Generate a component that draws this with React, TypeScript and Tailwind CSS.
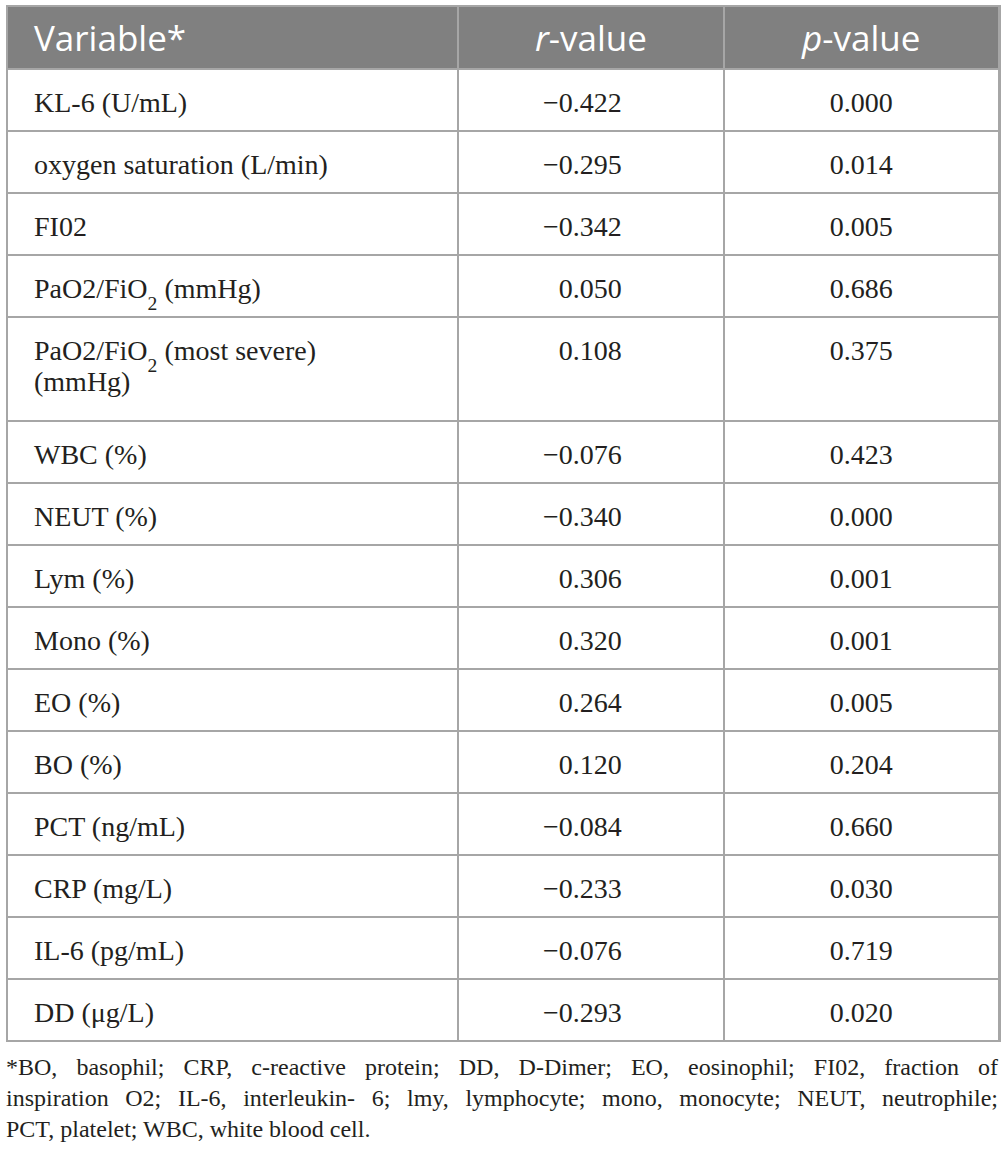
import React from 'react';

type Row = {
  label: React.ReactNode;
  r: string;
  p: string;
  tall?: boolean;
};

const rows: Row[] = [
  { label: 'KL-6 (U/mL)', r: '−0.422', p: '0.000' },
  { label: 'oxygen saturation (L/min)', r: '−0.295', p: '0.014' },
  { label: 'FI02', r: '−0.342', p: '0.005' },
  {
    label: (
      <>
        PaO2/FiO<sub className="text-[0.7em] align-[-0.35em]">2</sub> (mmHg)
      </>
    ),
    r: '0.050',
    p: '0.686',
  },
  {
    label: (
      <>
        PaO2/FiO<sub className="text-[0.7em] align-[-0.35em]">2</sub> (most severe)
        <br />
        (mmHg)
      </>
    ),
    r: '0.108',
    p: '0.375',
    tall: true,
  },
  { label: 'WBC (%)', r: '−0.076', p: '0.423' },
  { label: 'NEUT (%)', r: '−0.340', p: '0.000' },
  { label: 'Lym (%)', r: '0.306', p: '0.001' },
  { label: 'Mono (%)', r: '0.320', p: '0.001' },
  { label: 'EO (%)', r: '0.264', p: '0.005' },
  { label: 'BO (%)', r: '0.120', p: '0.204' },
  { label: 'PCT (ng/mL)', r: '−0.084', p: '0.660' },
  { label: 'CRP (mg/L)', r: '−0.233', p: '0.030' },
  { label: 'IL-6 (pg/mL)', r: '−0.076', p: '0.719' },
  { label: 'DD (μg/L)', r: '−0.293', p: '0.020' },
];

// footnote lines broken where the reference breaks them
const footnote = [
  '*BO, basophil; CRP, c-reactive protein; DD, D-Dimer; EO, eosinophil; FI02, fraction of',
  'inspiration O2; IL-6, interleukin- 6; lmy, lymphocyte; mono, monocyte; NEUT, neutrophile;',
  'PCT, platelet; WBC, white blood cell.',
];

function RValue({ value }: { value: string }) {
  const negative = value.startsWith('−');
  return (
    <span>
      <span className={negative ? '' : 'invisible'}>−</span>
      {negative ? value.slice(1) : value}
    </span>
  );
}

export default function App() {
  return (
    <div className="min-h-screen bg-white pl-[6px] pt-[5px] pr-[7px] text-[#231f20]">
      <table className="w-[992px] table-fixed border-collapse border-r-[3px] border-[#a6a6a6] font-['Liberation_Serif',serif] text-[28px] leading-[31px]">
        <colgroup>
          <col className="w-[451px]" />
          <col className="w-[266px]" />
          <col className="w-[275px]" />
        </colgroup>
        <thead>
          <tr className="h-[63px] bg-[#808080] font-['Open_Sans',sans-serif] text-[35px] font-normal text-white">
            <th className="border-2 border-[#a6a6a6] pl-[26px] text-left font-normal">Variable*</th>
            <th className="border-2 border-[#a6a6a6] text-center font-normal">
              <i>r</i>-value
            </th>
            <th className="border-2 border-r-[3px] border-[#a6a6a6] text-center font-normal">
              <i>p</i>-value
            </th>
          </tr>
        </thead>
        <tbody>
          {rows.map((row, i) => (
            <tr key={i} className={row.tall ? 'h-[104px]' : 'h-[62px]'}>
              <td className="border-2 border-[#a6a6a6] pl-[26px] pt-[17px] align-top">{row.label}</td>
              <td className="border-2 border-[#a6a6a6] pl-[84px] pt-[17px] align-top">
                <RValue value={row.r} />
              </td>
              <td className="border-2 border-r-[3px] border-[#a6a6a6] pt-[17px] text-center align-top">{row.p}</td>
            </tr>
          ))}
        </tbody>
      </table>
      <div className="mt-[10px] w-[992px] font-['Liberation_Serif',serif] text-[24px] leading-[31px]">
        {footnote.map((line, i) => (
          <div key={i} className={i < footnote.length - 1 ? 'text-justify [text-align-last:justify]' : 'text-left'}>
            {line}
          </div>
        ))}
      </div>
    </div>
  );
}
